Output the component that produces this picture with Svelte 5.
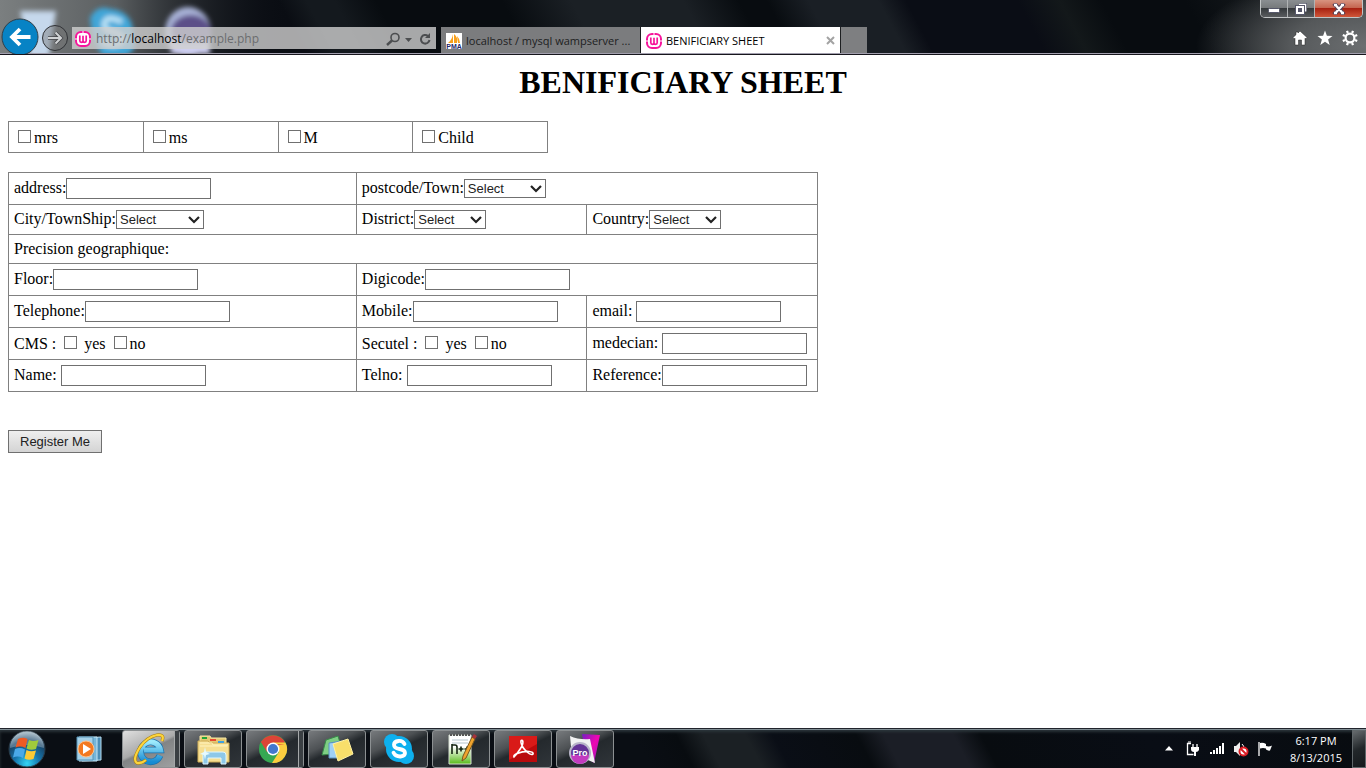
<script>
  const titles = ['mrs', 'ms', 'M', 'Child'];
</script>

{#snippet wamp()}
  <svg class="wamp" width="16" height="16" viewBox="0 0 16 16" aria-hidden="true">
    <rect x="1" y="1" width="14" height="14" rx="5" fill="#fff" stroke="#f6149b" stroke-width="2" />
    <path d="M0 8h2.5M13.5 8H16M8 0v2" stroke="#fff" stroke-width="1" />
    <path d="M4.800 4.500v5.200q0 1.600 1.600 1.600t1.600-1.600V4.800v4.900q0 1.600 1.600 1.600t1.600-1.600V4.500" fill="none" stroke="#f6149b" stroke-width="1.700" />
  </svg>
{/snippet}

{#snippet field(id, label, space = false)}
  <label for={id}>{label}</label>{#if space}{' '}{/if}<input type="text" {id} />
{/snippet}

{#snippet choice(id, label, size)}
  <label for={id}>{label}</label><select {id} class={size}><option>Select</option></select>
{/snippet}

<div class="screen">
  <header>
    <svg class="glass" width="100%" height="53" aria-hidden="true">
      <defs>
        <linearGradient id="haze"><stop offset="0" stop-color="#7b7f80" /><stop offset=".4" stop-color="#5b5f61" /><stop offset="1" stop-color="#0a0e14" stop-opacity="0" /></linearGradient>
        <filter id="soft" x="-30%" y="-30%" width="160%" height="160%"><feGaussianBlur stdDeviation="2.500" /></filter>
      </defs>
      <rect width="290" height="53" fill="url(#haze)" />
      <g filter="url(#soft)">
        <path d="M20 11h36l-7 46H30z" fill="#c6d8ec" />
        <path d="M90 18q7-14 20-9q23 2 23 25q6 16-8 22h-22q-11-15-13-38z" fill="#3fa6d8" />
        <path d="M122 22q-16-8-18 2q0 6 10 8q12 4 6 11q-8 5-18-2" fill="none" stroke="#c4e7f8" stroke-width="5" />
        <ellipse cx="188" cy="32" rx="23" ry="25" fill="#a9b3d8" />
        <ellipse cx="191" cy="31" rx="20" ry="16" fill="#5c5088" />
        <path d="M168 42h42v12h-38z" fill="#cfcff0" />
      </g>
    </svg>

    <div class="caption">
      <button aria-label="Minimize"><svg width="12" height="12" viewBox="0 0 12 12"><rect x=".5" y="5.500" width="11" height="4" rx="1" fill="#fff" stroke="#55576a" /></svg></button>
      <button aria-label="Restore"><svg width="12" height="12" viewBox="0 0 12 12"><path d="M4 1.500h6.500v7" fill="none" stroke="#55576a" stroke-width="3" /><path d="M4 1.500h6.500v7" fill="none" stroke="#fff" stroke-width="1.500" /><rect x="2" y="4" width="6" height="6" fill="#6a6c75" stroke="#55576a" stroke-width="4" /><rect x="2" y="4" width="6" height="6" fill="#55576a" stroke="#fff" stroke-width="2" /></svg></button>
      <button class="close" aria-label="Close"><svg width="14" height="12" viewBox="0 0 14 12"><path d="M3.500 2L10.500 10M10.500 2L3.500 10" stroke="#5c4658" stroke-width="4.500" stroke-linecap="square" /><path d="M3.500 2L10.500 10M10.500 2L3.500 10M2 2h3M9 2h3M2 10h3M9 10h3" stroke="#fff" stroke-width="2.300" /></svg></button>
    </div>

    <nav>
      <button class="back" aria-label="Back"><svg width="38" height="38" viewBox="0 0 38 38"><circle cx="19" cy="19" r="18" fill="#0783c5" stroke="#343f47" /><path d="M29.500 19H12M19 11l-8 8 8 8" fill="none" stroke="#fff" stroke-width="3.800" /></svg></button>
      <button class="forward" aria-label="Forward"><svg width="28" height="28" viewBox="0 0 28 28"><circle cx="14" cy="14" r="12.500" fill="#777" fill-opacity=".45" stroke="#303236" /><path d="M7 14h12M14.500 8.500L20 14l-5.500 5.500" fill="none" stroke="#44464a" stroke-width="3.500" /><path d="M7 14h12M14.500 8.500L20 14l-5.500 5.500" fill="none" stroke="#d0d2d4" stroke-width="2" /></svg></button>
      <div class="address">
        {@render wamp()}
        <span class="url">http://<b>localhost</b>/example.php</span>
        <svg width="48" height="16" viewBox="0 0 48 16" aria-hidden="true"><circle cx="10" cy="6.500" r="4" fill="none" stroke="#4c4e50" stroke-width="1.600" /><path d="M7 9.500L2 14" stroke="#4c4e50" stroke-width="2.400" /><path d="M20 7h7l-3.500 4z" fill="#4c4e50" /><path d="M43 5a4.300 4.300 0 1 0 1.500 4" fill="none" stroke="#4c4e50" stroke-width="2" /><path d="M45 2v5h-5z" fill="#4c4e50" /></svg>
      </div>
      <div class="tab">
        <svg width="16" height="16" viewBox="0 0 16 16" aria-hidden="true"><path fill="#fff" d="M0 0h16v16H0z" /><path d="M7 1v9H2q4-3 5-9zM8 1q4 3 3 9H8zM11 3q3 3 3 7h-2z" fill="#f8a01c" /><text x="8" y="16" text-anchor="middle" class="pma">PMA</text></svg>
        <span>localhost / mysql wampserver ...</span>
      </div>
      <div class="tab active">
        {@render wamp()}
        <span>BENIFICIARY SHEET</span>
        <button aria-label="Close tab"><svg width="9" height="9" viewBox="0 0 9 9"><path d="M1 1l7 7M8 1L1 8" stroke="#a3a3a3" stroke-width="2" /></svg></button>
      </div>
      <button class="newtab" aria-label="New tab"></button>
      <div class="tools">
        <button aria-label="Home"><svg width="16" height="16" viewBox="0 0 16 16"><path d="M8 1l7 6.500-1 1.500-1-.8V15H9.500v-5h-3v5H3V8.200L2 9 1 7.500l3-2.800V2h2v1z" fill="#fff" stroke="#222" stroke-width=".5" /></svg></button>
        <button aria-label="Favorites"><svg width="16" height="16" viewBox="0 0 16 16"><path d="M8 .5l1.900 5.300 5.600.1-4.400 3.500 1.600 5.600L8 11.800 3.300 15l1.600-5.600L.5 5.900l5.600-.1z" fill="#fff" /></svg></button>
        <button aria-label="Tools"><svg width="16" height="16" viewBox="0 0 16 16"><circle cx="8" cy="8" r="4.400" fill="none" stroke="#fff" stroke-width="2.200" /><g stroke="#fff" stroke-width="2.200"><path d="M5.900 3L5 .8M10.100 3L11 .8M5.900 13L5 15.200M10.100 13l.9 2.200M3 5.900L.8 5M3 10.100L.8 11M13 5.900l2.200-.9M13 10.100l2.200.9" /></g></svg></button>
      </div>
    </nav>
  </header>

  <main>
    <h1>BENIFICIARY SHEET</h1>
    <form onsubmit={(e) => e.preventDefault()}>
      <table class="titles">
        <tbody>
          <tr>
            {#each titles as title}
              <td><input type="checkbox" id={title} /><label for={title}>{title}</label></td>
            {/each}
          </tr>
        </tbody>
      </table>

      <table class="details">
        <colgroup><col class="wide" /><col class="narrow" /><col class="narrow" /></colgroup>
        <tbody>
          <tr><td>{@render field('address', 'address:')}</td><td colspan="2">{@render choice('town', 'postcode/Town:', 'medium')}</td></tr>
          <tr><td>{@render choice('city', 'City/TownShip:', 'large')}</td><td>{@render choice('district', 'District:', 'small')}</td><td>{@render choice('country', 'Country:', 'small')}</td></tr>
          <tr><td colspan="3">Precision geographique:</td></tr>
          <tr><td>{@render field('floor', 'Floor:')}</td><td colspan="2">{@render field('digicode', 'Digicode:')}</td></tr>
          <tr><td>{@render field('telephone', 'Telephone:')}</td><td>{@render field('mobile', 'Mobile:')}</td><td>{@render field('email', 'email:', true)}</td></tr>
          <tr>
            <td>CMS : <input type="checkbox" id="cms-yes" /> <label for="cms-yes">yes</label> <input type="checkbox" id="cms-no" /><label for="cms-no">no</label></td>
            <td>Secutel : <input type="checkbox" id="sec-yes" /> <label for="sec-yes">yes</label> <input type="checkbox" id="sec-no" /><label for="sec-no">no</label></td>
            <td>{@render field('medecian', 'medecian:', true)}</td>
          </tr>
          <tr><td>{@render field('name', 'Name:', true)}</td><td>{@render field('telno', 'Telno:', true)}</td><td>{@render field('reference', 'Reference:')}</td></tr>
        </tbody>
      </table>
      <button class="register">Register Me</button>
    </form>
  </main>

  <footer>
    <button class="start" aria-label="Start">
      <svg width="38" height="38" viewBox="0 0 38 38">
        <defs><radialGradient id="orb" cx=".5" cy=".9" r=".85"><stop offset="0" stop-color="#35d5f5" /><stop offset=".4" stop-color="#1676ad" /><stop offset=".75" stop-color="#174468" /><stop offset="1" stop-color="#8ba5b5" /></radialGradient></defs>
        <circle cx="19" cy="19" r="18" fill="url(#orb)" stroke="#2b3b47" />
        <path d="M2 18a17 17 0 0 1 34 0q-17-6-34 0z" fill="#fff" opacity=".28" />
        <path d="M10 9q5-2.500 9.500 0l-2 9q-5-2.500-10-.5z" fill="#ee5a24" />
        <path d="M21 10q4.500 2 9.500 0l-2.500 9q-5 1.800-9.500-.5z" fill="#9fca3c" />
        <path d="M7 19q5-2 10 .5l-2 8.500q-5-2.500-10-.5z" fill="#4aa9e8" />
        <path d="M18.500 20q4.500 2.200 9.500.4l-2.500 8.600q-5 1.800-9-.6z" fill="#fcca35" />
      </svg>
    </button>

    <div class="apps">
      <button class="flat" aria-label="Media Player"><svg width="28" height="28" viewBox="0 0 28 28"><path d="M7 3l19-1v23L7 26z" fill="#4b8db5" stroke="#b8ddf0" /><path d="M4 2h18v24H4z" fill="#77b6d9" stroke="#c5e7f7" /><path d="M2 2h16v23H2z" fill="#a6d1e8" stroke="#5795b8" /><circle cx="11" cy="14" r="8" fill="#f37920" stroke="#fbc391" /><path d="M8 9v10l8-5z" fill="#fff" /></svg></button>
      <button class="current stack" aria-label="Internet Explorer"><svg width="34" height="34" viewBox="0 0 34 34"><defs><linearGradient id="ie" x2="0" y2="1"><stop stop-color="#9deafc" /><stop offset="1" stop-color="#168bd3" /></linearGradient></defs><path d="M28 23.500A10 10 0 1 1 28.500 18H12" fill="none" stroke="#1a70ac" stroke-width="6.600" /><path d="M28 23.500A10 10 0 1 1 28.500 18H12" fill="none" stroke="url(#ie)" stroke-width="5.200" /><path d="M30 9Q33 2 25 3Q15 5 8 15Q0 28 5 31q4 1 9-3" fill="none" stroke="#a97c08" stroke-width="3.200" /><path d="M30 9Q33 2 25 3Q15 5 8 15Q0 28 5 31q4 1 9-3" fill="none" stroke="#fcd43c" stroke-width="2.200" /></svg></button>
      <button aria-label="File Explorer"><svg width="34" height="34" viewBox="0 0 34 34"><path d="M4 4h10l1 2h15v20H4z" fill="#e3c873" stroke="#f8e9a4" /><path d="M6 5h5v2H6z" fill="#22a438" /><path d="M14 7h6v2h-6z" fill="#e84b30" /><path d="M2 9h10l2 2h19v19H2z" fill="#f6df92" stroke="#cfae59" /><path d="M4 11h12l1 2h15M4 14h27" fill="none" stroke="#fff4bf" /><path d="M22 9h6v2h-6z" fill="#3fa1df" /><path d="M7 32V23q0-3 3-3h17q3 0 3 3v9h-5v-6H12v6z" fill="#8ec8e8" stroke="#dff7ff" /><path d="M9 15l1 5 4 2-4 1-1 5-1-5-4-1 4-2z" fill="#e5faff" /></svg></button>
      <button class="stack" aria-label="Chrome"><svg width="30" height="30" viewBox="0 0 30 30"><circle cx="15" cy="15" r="14" fill="#36a852" /><path d="M15 15L2.900 8A14 14 0 0 1 27 8z" fill="#dc4437" /><path d="M15 8.500h12.400A14 14 0 0 1 14 29L21 18z" fill="#fcce3f" /><path d="M2.900 8L9 18l6-7h12" fill="#dc4437" /><circle cx="15" cy="15" r="6.500" fill="#fff" /><circle cx="15" cy="15" r="5.100" fill="#4378ce" /></svg></button>
      <button aria-label="Sticky Notes"><svg width="34" height="28" viewBox="0 0 34 28"><path d="M6 5l12-4 5 17-21 2z" fill="#7fcf84" stroke="#388b49" /><path d="M9 8l13-2 2 17H9z" fill="#9fd0f5" stroke="#5a93c0" /><path d="M13 9l15-5 5 15-15 7z" fill="#f8df6b" stroke="#fff2a3" /></svg></button>
      <button aria-label="Skype"><svg width="32" height="32" viewBox="0 0 32 32"><circle cx="16" cy="16" r="13" fill="#0eb0ee" /><circle cx="9" cy="9" r="8" fill="#0eb0ee" /><circle cx="23" cy="23" r="8" fill="#0eb0ee" /><path d="M21.500 11q-2-3.500-6-3-4.500 .5-4.500 3.800t5.500 4.200q5.500 1 5.500 4t-4.500 3.500q-5 .2-7-3.800" fill="none" stroke="#fff" stroke-width="3.800" stroke-linecap="round" /></svg></button>
      <button aria-label="Notepad++"><svg width="32" height="34" viewBox="0 0 32 34"><defs><linearGradient id="page" x2="0" y2="1"><stop offset=".4" stop-color="#fff" /><stop offset="1" stop-color="#58bb19" /></linearGradient></defs><path d="M4 3h22v29H4z" fill="url(#page)" stroke="#d5ded1" /><path d="M5 3h20" stroke="#555" stroke-width="2" stroke-dasharray="2 1" /><path d="M7 8h16M7 11h16" stroke="#b5c5cc" /><path d="M7 22V12M7 13h3q2 0 2 2v7M13.500 17h5M16 14.500v5M19.500 17h5M22 14.500v5" fill="none" stroke="#142511" stroke-width="1.600" /><path d="M27 5l3 2-9 19-4 3 1-5z" fill="#efa32d" stroke="#79581d" /><path d="M27 5l2-3 3 2-2 3z" fill="#a7333b" /></svg></button>
      <button aria-label="Adobe Reader"><svg width="28" height="28" viewBox="0 0 28 28"><path d="M0 1h28v26H0z" fill="#b90a0c" /><path d="M0 1h28v8L0 25z" fill="#d91a18" /><path d="M5 22q3-3 6.500-8.500Q15 8 13.500 5.500q-2-1-1.500 2 1 5 6 9.500 4 3.500 6 2 1-2-4-2.500-5-.5-12 2-4 2-3 3.500z" fill="none" stroke="#fff" stroke-width="1.600" /></svg></button>
      <button aria-label="Pro"><svg width="34" height="32" viewBox="0 0 34 32"><defs><linearGradient id="pro" x2="1" y2="1"><stop stop-color="#721fc4" /><stop offset=".5" stop-color="#f006b2" /><stop offset="1" stop-color="#7f20b8" /></linearGradient></defs><path d="M14 1l18 1-6 28-8-6z" fill="url(#pro)" /><path d="M2 3q9 4 20 3l5 24q-12-6-23-6z" fill="#f2f2f2" /><circle cx="12" cy="20" r="10" fill="#653397" stroke="#b9b6c9" stroke-width="2" /><path d="M3 22h18a9 9 0 0 1-18 0z" fill="#c33bc0" /><text x="12" y="23" text-anchor="middle" class="pro">Pro</text></svg></button>
    </div>

    <div class="tray">
      <svg class="up" width="8" height="5" viewBox="0 0 8 5" aria-hidden="true"><path d="M0 4.500h8L4 0z" fill="#fff" /></svg>
      <svg width="16" height="16" viewBox="0 0 16 16" aria-hidden="true"><path d="M6 2.500H2.500v11h6" fill="none" stroke="#fff" stroke-width="1.300" /><path d="M3 1h3" stroke="#fff" /><path d="M6 6h8v3q-1 2-3 2v4H9v-4q-3 0-3-3z" fill="#fff" /><path d="M8 3v4M12 3v4" stroke="#fff" stroke-width="1.300" /></svg>
      <svg width="16" height="16" viewBox="0 0 16 16" aria-hidden="true"><path d="M1 11h2v2H1zM4 9h2v4H4zM7 7h2v6H7zM10 5h2v8h-2zM13 2h2v11h-2z" fill="#fff" /></svg>
      <svg width="16" height="16" viewBox="0 0 16 16" aria-hidden="true"><path d="M1 5h2l4-4v14l-4-4H1z" fill="#eee" /><path d="M9 3q2 2 2 4" fill="none" stroke="#fff" /><circle cx="10.500" cy="10.500" r="4" fill="#fff" stroke="#dc1d24" stroke-width="2" /><path d="M8 8l5 5" stroke="#dc1d24" stroke-width="2" /></svg>
      <svg width="16" height="16" viewBox="0 0 16 16" aria-hidden="true"><path d="M2 1v14" stroke="#fff" stroke-width="1.300" /><path d="M3 2q3-1 6 1v2q3 1 6-.5l-2 5q-2 .5-4-1v-1q-3-1-6 0z" fill="#fff" /></svg>
    </div>
    <div class="clock"><span>6:17 PM</span><span>8/13/2015</span></div>
    <button class="desktop" aria-label="Show desktop"></button>
  </footer>
</div>

<style>
  :global(body) { margin: 0; background: #fff; }
  .screen { min-height: 100vh; display: flex; flex-direction: column; font: 16px/18px "Liberation Serif", serif; color: #000; }
  button { padding: 0; border: 0; background: none; font: inherit; }
  svg { display: block; flex: none; }

  header {
    position: relative;
    display: flex;
    flex-direction: column;
    overflow: hidden;
    border-bottom: 1px solid #17161d;
    font: 12px/16px "Open Sans", sans-serif;
    background: radial-gradient(ellipse 170px 75px at 100% 85%, #6c6f71, #55585a 45%, transparent),
      linear-gradient(62deg, #0a0d13 0 22%, #14191e 24% 26%, #080c10 29% 38%, #1b2025 43% 51%, #080c10 55% 57%, #1a1f25 60% 65%, #0a0d15 67% 75%, #13181a 78%, #080c10 81% 87%, #24282a);
  }
  .glass { position: absolute; left: 0; top: 0; }
  .caption { position: relative; align-self: flex-end; display: flex; height: 18px; margin-right: 3px; border: 1px solid #c1c4c5; border-top: 0; border-radius: 0 0 5px 5px; box-sizing: border-box; overflow: hidden; }
  .caption button { width: 27px; display: grid; place-items: center; background: linear-gradient(#8a8e91, #777a7c 45%, #34383b 48%, #595c5f); border-right: 1px solid #b0b3b4; }
  .caption .close { width: 47px; border: 0; background: linear-gradient(#d89480, #c56650 45%, #a62010 48%, #cf5639); }
  nav { position: relative; display: flex; align-items: flex-end; height: 35px; border-bottom: 1px solid #a29fae; }
  .back { align-self: flex-start; margin: 0 -1px 0 1px; }
  .forward { height: 28px; margin: 0 3px 1px; }
  .address { flex: 0 1 364px; min-width: 120px; height: 22px; margin-bottom: 4px; display: flex; align-items: center; gap: 5px; padding: 2px 3px 0; box-sizing: border-box; background: rgb(208 208 208 / 80%); color: #6b6d6f; overflow: hidden; }
  .url { flex: 1; white-space: nowrap; }
  .url b { font-weight: 400; color: #000; }
  .tab { flex: 0 1 200px; min-width: 80px; height: 26px; display: flex; align-items: center; gap: 4px; padding: 1px 5px 0; box-sizing: border-box; background: #7b7c7e; border-right: 1px solid #1d1f21; color: #1d1e1f; font-size: 11px; white-space: nowrap; overflow: hidden; }
  .address + .tab { margin-left: 5px; }
  .tab span { flex: 1; }
  .tab.active { background: #fff; color: #000; }
  .newtab { width: 26px; height: 26px; background: #7e7f81; }
  .tools { margin: 0 8px 7px auto; display: flex; gap: 9px; }
  .pma { font: bold 7px "Liberation Sans", sans-serif; fill: #26286a; }

  main { flex: 1; padding: 8px; }
  h1 { margin: 0 0 20px; font-size: 32px; line-height: 38px; text-align: center; }
  table { border-collapse: collapse; white-space: nowrap; }
  td { border: 1px solid #808080; padding: 5px; }
  .titles { width: 40%; line-height: 20px; margin-bottom: 19px; }
  .titles td { width: 25%; padding: 6px 5px 4px; }
  .details { width: 60%; table-layout: fixed; min-width: 740px; margin-bottom: 38px; }
  .wide { width: 43%; }
  input, select { box-sizing: border-box; border: 1px solid #707070; border-radius: 0; background: #fff; margin: 0; vertical-align: baseline; appearance: none; font: 13px "Liberation Sans", sans-serif; color: #222; }
  input[type="text"] { width: 145px; height: 21px; padding: 1px 2px; }
  input[type="checkbox"] { width: 13px; height: 13px; margin: 0 3px 0 4px; }
  select { height: 19px; padding: 0 3px; background: #fff url("data:image/svg+xml,%3Csvg xmlns='http://www.w3.org/2000/svg' width='12' height='8'%3E%3Cpath d='M1 1l5 5 5-5' fill='none' stroke='%23222' stroke-width='2.200'/%3E%3C/svg%3E") no-repeat right 3px center; }
  .small { width: 72px; }
  .medium { width: 82px; }
  .large { width: 88px; }
  .register { height: 23px; padding: 0 11px; border: 1px solid #707070; background: linear-gradient(#eee, #d4d4d4); font: 13px "Liberation Sans", sans-serif; color: #222; display: block; }

  footer {
    height: 40px;
    display: flex;
    align-items: center;
    box-sizing: border-box;
    border-top: 1px solid #20242c;
    box-shadow: inset 0 1px #7f8d93, inset 0 3px 3px #2b353a;
    background: linear-gradient(62deg, #0a0e14 0 47%, #080c10 50%, #1b2024 52% 55%, #0a0e16 57%, #080c10 63%, #1b1e26 65% 70%, #080c10 72%, #090d15 84%, #080c10);
  }
  .start { margin: 0 14px 0 8px; }
  .apps { display: flex; gap: 4px; align-self: stretch; padding-top: 1px; }
  .apps button { position: relative; width: 58px; display: grid; place-items: center; box-sizing: border-box; border: 1px solid #8c9092; border-radius: 3px; background: linear-gradient(155deg, #777a7d 0, #4d5154 35%, #24292d 50%, #30353a); }
  .apps .flat { border: 0; background: none; }
  .apps .current { background: linear-gradient(155deg, #e0e0e0, #aaa 45%, #828485 50%, #a0a2a3); }
  .apps .stack { padding-right: 5px; }
  .stack::after { content: ""; position: absolute; right: 0; top: 0; bottom: 0; width: 4px; background: #3a3f43; border-left: 1px solid #a5a8a9; }
  .pro { font: bold 9px "Liberation Sans", sans-serif; fill: #fff; }
  .tray { margin-left: auto; display: flex; align-items: center; gap: 8px; }
  .up { margin-right: 4px; }
  .clock { display: flex; flex-direction: column; align-items: center; width: 54px; margin: 0 9px 0 16px; color: #fff; font: 11px/17px "Open Sans", sans-serif; }
  .desktop { align-self: stretch; width: 14px; margin-top: 1px; border: 1px solid #60676a; background: linear-gradient(155deg, #666b6e, #22272a 50%, #15191c); }
</style>
